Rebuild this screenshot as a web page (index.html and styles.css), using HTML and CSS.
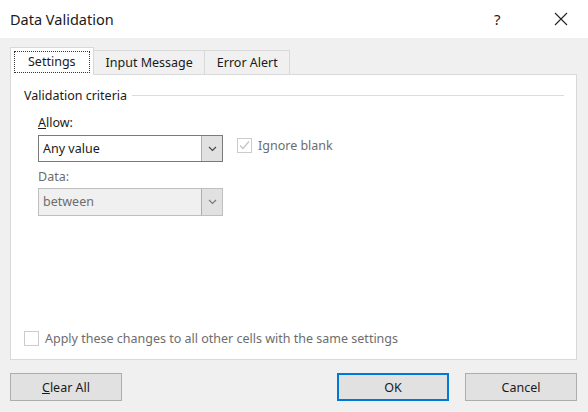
FILE: index.html
```html
<!DOCTYPE html>
<html lang="en">
<head>
    <meta charset="UTF-8">
    <title>Data Validation</title>
    <link rel="stylesheet" href="styles.css">
</head>
<body>
    <div class="dialog">
        <div class="titlebar">
            <span class="title">Data Validation</span>
            <span class="help">?</span>
            <span class="close">
                <svg width="14" height="14" viewBox="0 0 14 14"><path d="M1 1 L13 13 M13 1 L1 13" stroke="#222" stroke-width="1.1" fill="none"/></svg>
            </span>
        </div>

        <div class="tabs">
            <div class="tab active"><span class="focus">Settings</span></div>
            <div class="tab">Input Message</div>
            <div class="tab">Error Alert</div>
        </div>

        <div class="panel">
            <div class="group-title">
                <span>Validation criteria</span>
                <span class="rule"></span>
            </div>

            <div class="criteria">
                <div class="fields">
                    <label class="field-label"><u>A</u>llow:</label>
                    <div class="select">
                        <span class="value">Any value</span>
                        <span class="arrow">
                            <svg width="9" height="6" viewBox="0 0 9 6"><path d="M1 1 L4.5 4.5 L8 1" stroke="#444" stroke-width="1.1" fill="none"/></svg>
                        </span>
                    </div>
                    <label class="field-label disabled">Data:</label>
                    <div class="select disabled">
                        <span class="value">between</span>
                        <span class="arrow">
                            <svg width="9" height="6" viewBox="0 0 9 6"><path d="M1 1 L4.5 4.5 L8 1" stroke="#777" stroke-width="1.1" fill="none"/></svg>
                        </span>
                    </div>
                </div>
                <div class="ignore">
                    <span class="checkbox">
                        <svg width="13" height="13" viewBox="0 0 13 13"><path d="M2 6.5 L5 9.5 L11 2.5" stroke="#c4c4c4" stroke-width="1.3" fill="none"/></svg>
                    </span>
                    <span class="disabled">Ignore blank</span>
                </div>
            </div>

            <div class="apply">
                <span class="checkbox"></span>
                <span class="disabled">Apply these changes to all other cells with the same settings</span>
            </div>
        </div>

        <div class="footer">
            <button class="btn"><u>C</u>lear All</button>
            <span class="spacer"></span>
            <button class="btn default">OK</button>
            <button class="btn">Cancel</button>
        </div>
    </div>
</body>
</html>
```

FILE: styles.css
```css
body {
    margin: 0;
    font-family: "Noto Sans", "Open Sans", sans-serif;
    font-size: 12.5px;
    color: #1a1a1a;
    background-color: #f0f0f0;
}
.dialog {
    width: 588px;
    height: 412px;
    display: flex;
    flex-direction: column;
}
.titlebar {
    height: 38px;
    background: #fff;
    display: flex;
    align-items: center;
    padding: 0 0 0 10px;
}
.title {
    font-size: 14.5px;
    flex: 1;
}
.help {
    font-size: 15px;
    width: 60px;
    text-align: left;
}
.close {
    width: 34px;
    display: flex;
    align-items: center;
}
.tabs {
    display: flex;
    align-items: flex-end;
    margin-top: 9px;
    padding-left: 10px;
    height: 27px;
}
.tab {
    height: 23px;
    padding: 0 11px 0 12px;
    display: flex;
    align-items: center;
    border: 1px solid #d9d9d9;
    border-bottom: none;
    border-left: none;
    background: #f0f0f0;
}
.tab.active {
    height: 27px;
    padding: 0 3px;
    background: #fff;
    border-left: 1px solid #d9d9d9;
    margin-bottom: -1px;
    position: relative;
    z-index: 1;
}
.focus {
    border: 1px dotted #333;
    padding: 1px 13px 2px;
}
.panel {
    margin: 0 11px 0 10px;
    height: 284px;
    background: #fff;
    border: 1px solid #d9d9d9;
    padding: 0 12px 0 13px;
    display: flex;
    flex-direction: column;
}
.group-title {
    display: flex;
    align-items: center;
    margin-top: 12px;
    gap: 5px;
}
.rule {
    flex: 1;
    border-top: 1px solid #dcdcdc;
}
.criteria {
    display: flex;
    padding-left: 14px;
    margin-top: 11px;
}
.fields {
    width: 185px;
    display: flex;
    flex-direction: column;
}
.field-label {
    height: 16px;
    line-height: 16px;
}
.field-label.disabled {
    margin-top: 7px;
}
.select {
    margin-top: 4px;
    height: 25px;
    border: 1px solid #7a7a7a;
    display: flex;
    background: #fff;
}
.select .value {
    flex: 1;
    padding-left: 4px;
    line-height: 25px;
}
.select .arrow {
    width: 20px;
    border-left: 1px solid #adadad;
    background: #e1e1e1;
    display: flex;
    align-items: center;
    justify-content: center;
}
.select.disabled {
    margin-top: 3px;
    height: 26px;
    background: #f0f0f0;
    border-color: #bfbfbf;
}
.disabled {
    color: #6d6d6d;
}
.ignore {
    display: flex;
    align-items: center;
    gap: 6px;
    margin-left: 14px;
    margin-top: 21px;
    height: 18px;
}
.checkbox {
    width: 13px;
    height: 13px;
    border: 1px solid #cccccc;
    background: #fff;
    display: inline-flex;
}
.apply {
    margin-top: auto;
    margin-bottom: 12px;
    display: flex;
    align-items: center;
    gap: 6px;
}
.footer {
    display: flex;
    padding: 0 11px 0 10px;
    margin-top: 13px;
    gap: 16px;
}
.spacer {
    flex: 1;
}
.btn {
    width: 112px;
    height: 28px;
    font-family: inherit;
    font-size: 12.5px;
    color: #1a1a1a;
    background: #e1e1e1;
    border: 1px solid #adadad;
    padding: 0;
}
.btn.default {
    border: 2px solid #0078d7;
}
```
